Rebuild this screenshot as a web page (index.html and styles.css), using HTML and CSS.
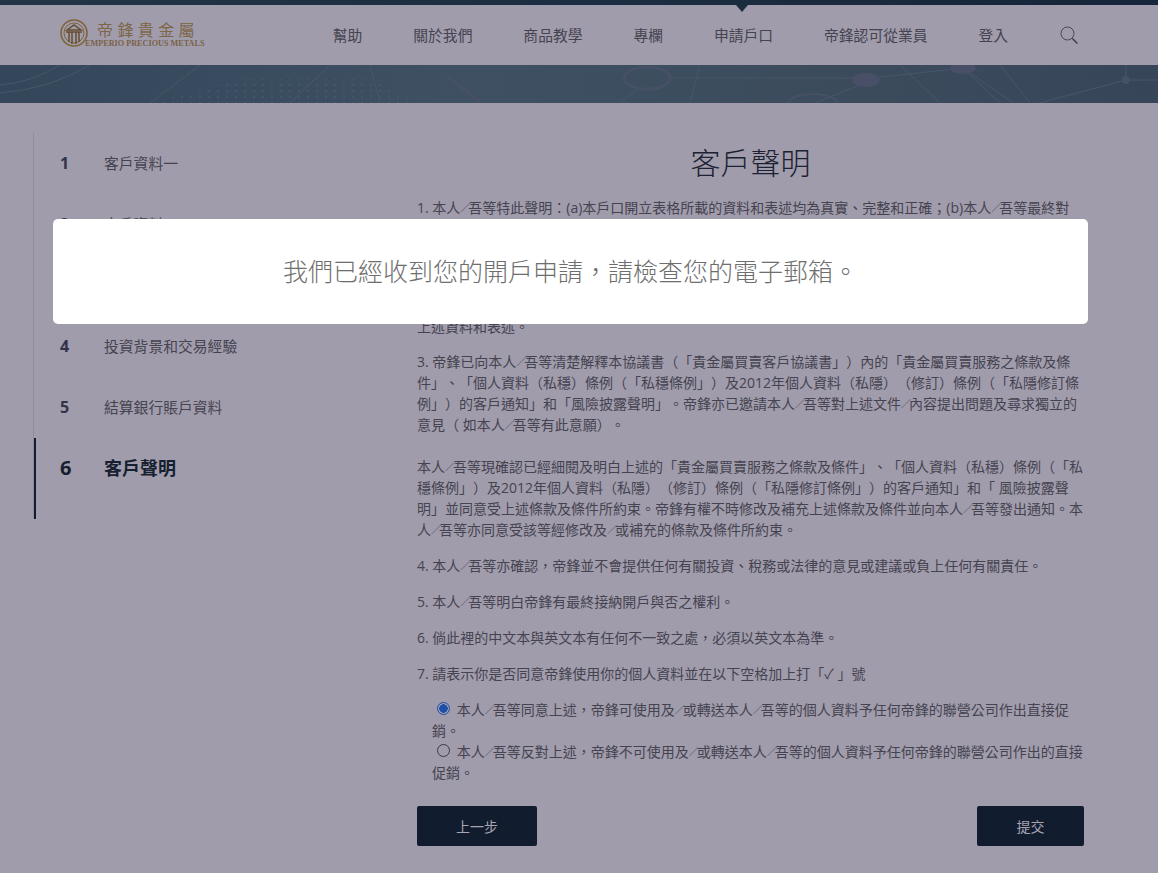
FILE: index.html
```html
<!DOCTYPE html>
<html>
<head>
<meta charset="utf-8" />
<title>客戶聲明</title>
<link rel="stylesheet" href="styles.css">
</head>
<body>
<div class="topline"><span class="topline_arrow"></span></div>
<div class="nav">
  <a class="logo">
    <svg class="logo_mark" viewBox="0 0 28 28" width="28" height="28">
      <circle cx="14" cy="14" r="13" fill="none" stroke="#7e6339" stroke-width="1.6"/>
      <circle cx="14" cy="14" r="10" fill="none" stroke="#7e6339" stroke-width="1"/>
      <path d="M7 11 L14 6 L21 11 Z M6 13 H22 M9 13 V23 M12 13 V25 M16 13 V25 M19 13 V23" fill="none" stroke="#654c2e" stroke-width="1.5"/>
    </svg>
    <span class="logo_text">
      <span class="logo_zh">帝鋒貴金屬</span>
      <span class="logo_en">EMPERIO PRECIOUS METALS</span>
    </span>
  </a>
  <div class="menu">
    <a>幫助</a>
    <a>關於我們</a>
    <a>商品教學</a>
    <a>專欄</a>
    <a>申請戶口</a>
    <a>帝鋒認可從業員</a>
    <a>登入</a>
    <svg class="search" viewBox="0 0 18 18" width="18" height="18">
      <circle cx="7.5" cy="7.5" r="6.5" fill="none" stroke="#4a4858" stroke-width="1"/>
      <path d="M12.4 12.4 L17.4 17.4" fill="none" stroke="#3c3a48" stroke-width="1.4"/>
    </svg>
  </div>
</div>
<div class="banner">
  <svg viewBox="0 0 1158 38" width="1158" height="38">
    <defs>
      <linearGradient id="bannerbg" x1="0" x2="1" y1="0" y2="0">
        <stop offset="0" stop-color="#34465a"/>
        <stop offset=".4" stop-color="#3e5062"/>
        <stop offset=".75" stop-color="#3b4b5c"/>
        <stop offset="1" stop-color="#374559"/>
      </linearGradient>
      <pattern id="dots" width="9" height="6" patternUnits="userSpaceOnUse">
        <circle cx="2" cy="2" r="1" fill="#4f6173"/>
      </pattern>
    </defs>
    <rect width="1158" height="38" fill="url(#bannerbg)"/>
    <path d="M150 38 L240 14 L370 14 L420 38 Z" fill="url(#dots)" opacity=".6"/>
    <g fill="none" stroke="#47576a" stroke-width="1">
      <path d="M0 28 Q50 24 90 0 M0 20 Q30 18 60 0 M150 38 L200 0 M290 38 L330 0 M370 0 L380 38"/>
      <path d="M670 13 H872 L963 3 L1013 38 M872 15 L815 38 M963 3 L1000 38 M1126 15 L1058 33 L1040 38 M1126 0 V15 L1158 15"/>
      <path d="M620 38 L640 22 M900 0 L940 38 M700 0 L690 38 M1000 0 L1030 38"/>
    </g>
    <ellipse cx="647" cy="13" rx="23" ry="11" fill="none" stroke="#465066" stroke-width="3"/>
    <ellipse cx="866" cy="15" rx="14" ry="7" fill="#484f66"/>
    <ellipse cx="963" cy="3" rx="13" ry="6" fill="#484f66"/>
    <ellipse cx="813" cy="38" rx="24" ry="9" fill="none" stroke="#465066" stroke-width="2"/>
    <path d="M448 12 L481 38" stroke="#465066" stroke-width="3"/>
    <circle cx="1126" cy="15" r="4" fill="#465066"/>
  </svg>
</div>

<div class="main">
  <div class="steps">
    <div class="step"><b>1</b><span>客戶資料一</span></div>
    <div class="step"><b>2</b><span>客戶資料二</span></div>
    <div class="step"><b>3</b><span>財務狀況</span></div>
    <div class="step"><b>4</b><span>投資背景和交易經驗</span></div>
    <div class="step"><b>5</b><span>結算銀行賬戶資料</span></div>
    <div class="step active"><b>6</b><span>客戶聲明</span></div>
  </div>
  <div class="content">
    <h1>客戶聲明</h1>
    <p class="tight">1. 本人<span class="sl">&#xFF0F;</span>吾等特此聲明&#xFF1A;(a)本戶口開立表格所載的資料和表述均為真實、完整和正確&#xFF1B;(b)本人<span class="sl">&#xFF0F;</span>吾等最終對<br>本戶口的交易及信貸風險負責&#xFF0C;且本人<span class="sl">&#xFF0F;</span>吾等為本戶口的唯一實益擁有人&#xFF1B;(c)本戶口開立表格所載的資料為最新資料&#xFF0C;若資料有任何變更&#xFF0C;本人<span class="sl">&#xFF0F;</span>吾等將立即通知帝鋒&#xFF1B;(d)本人<span class="sl">&#xFF0F;</span>吾等確認已閱讀並明白本戶口開立表格內的所有條款&#xFF0C;並同意受其約束。</p>
    <p class="tight">2. 本人<span class="sl">&#xFF0F;</span>吾等授權帝鋒或其代表向任何人士或機構查核及索取任何有關資料&#xFF0C;以核實本人<span class="sl">&#xFF0F;</span>吾等所提供的<br>上述資料和表述。</p>
    <p class="spaced">3. 帝鋒已向本人<span class="sl">&#xFF0F;</span>吾等清楚解釋本協議書&#xFF08;「貴金屬買賣客戶協議書」&#xFF09;內的「貴金屬買賣服務之條款及條件」、「個人資料&#xFF08;私穩&#xFF09;條例&#xFF08;「私穩條例」&#xFF09;及2012年個人資料&#xFF08;私隱&#xFF09;&#xFF08;修訂&#xFF09;條例&#xFF08;「私隱修訂條例」&#xFF09;的客戶通知」和「風險披露聲明」。帝鋒亦已邀請本人<span class="sl">&#xFF0F;</span>吾等對上述文件<span class="sl">&#xFF0F;</span>內容提出問題及尋求獨立的意見&#xFF08; 如本人<span class="sl">&#xFF0F;</span>吾等有此意願&#xFF09;。</p>
    <p>本人<span class="sl">&#xFF0F;</span>吾等現確認已經細閱及明白上述的「貴金屬買賣服務之條款及條件」、「個人資料&#xFF08;私穩&#xFF09;條例&#xFF08;「私穩條例」&#xFF09;及2012年個人資料&#xFF08;私隱&#xFF09;&#xFF08;修訂&#xFF09;條例&#xFF08;「私隱修訂條例」&#xFF09;的客戶通知」和「 風險披露聲明」並同意受上述條款及條件所約束。帝鋒有權不時修改及補充上述條款及條件並向本人<span class="sl">&#xFF0F;</span>吾等發出通知。本人<span class="sl">&#xFF0F;</span>吾等亦同意受該等經修改及<span class="sl">&#xFF0F;</span>或補充的條款及條件所約束。</p>
    <p>4. 本人<span class="sl">&#xFF0F;</span>吾等亦確認&#xFF0C;帝鋒並不會提供任何有關投資、稅務或法律的意見或建議或負上任何有關責任。</p>
    <p>5. 本人<span class="sl">&#xFF0F;</span>吾等明白帝鋒有最終接納開戶與否之權利。</p>
    <p>6. 倘此裡的中文本與英文本有任何不一致之處&#xFF0C;必須以英文本為準。</p>
    <p>7. 請表示你是否同意帝鋒使用你的個人資料並在以下空格加上打「✓ 」號</p>
    <div class="choices">
      <label><input type="radio" name="consent" checked /> 本人<span class="sl">&#xFF0F;</span>吾等同意上述&#xFF0C;帝鋒可使用及<span class="sl">&#xFF0F;</span>或轉送本人<span class="sl">&#xFF0F;</span>吾等的個人資料予任何帝鋒的聯營公司作出直接促銷。</label>
      <label><input type="radio" name="consent" /> 本人<span class="sl">&#xFF0F;</span>吾等反對上述&#xFF0C;帝鋒不可使用及<span class="sl">&#xFF0F;</span>或轉送本人<span class="sl">&#xFF0F;</span>吾等的個人資料予任何帝鋒的聯營公司作出的直接促銷。</label>
    </div>
    <div class="buttons">
      <button class="prev">上一步</button>
      <button class="submit">提交</button>
    </div>
  </div>
</div>

<div class="modal">我們已經收到您的開戶申請&#xFF0C;請檢查您的電子郵箱。</div>
</body>
</html>
```

FILE: styles.css
```css
* {
  box-sizing: border-box;
}
body {
  margin: 0;
  height: 873px;
  overflow: hidden;
  position: relative;
  background-color: #a09cac;
  color: #45434f;
  font-family: 'Open Sans', 'Noto Sans CJK TC', sans-serif;
  font-size: 14px;
  text-spacing-trim: space-all;
}
.topline {
  height: 5px;
  background: linear-gradient(to right, #213547, #16263a);
  position: relative;
}
.topline_arrow {
  position: absolute;
  left: 736px;
  top: 5px;
  border-left: 6px solid transparent;
  border-right: 6px solid transparent;
  border-top: 7px solid #1c2d40;
}
.nav {
  height: 60px;
  display: flex;
  align-items: center;
  justify-content: space-between;
  padding: 0 80px 0 60px;
}
.logo {
  display: flex;
  align-items: flex-start;
}
.logo_mark {
  display: block;
  margin-top: -2px;
}
.logo_text {
  display: block;
  margin-left: -3px;
}
.logo_zh {
  display: block;
  margin-left: 12px;
  font-size: 16px;
  line-height: 18px;
  letter-spacing: 4.4px;
  color: #7d6547;
}
.logo_en {
  display: block;
  font-family: 'Liberation Serif', serif;
  font-weight: bold;
  font-size: 8.2px;
  line-height: 10px;
  color: #7a6245;
  white-space: nowrap;
}
.menu {
  display: flex;
  align-items: center;
  gap: 50.9px;
  font-size: 14.8px;
  line-height: 20px;
  color: #45434f;
  margin-top: -1px;
}
.search {
  display: block;
  margin-left: 1px;
  margin-top: 1px;
}
.banner {
  height: 38px;
  overflow: hidden;
}
.banner svg {
  display: block;
}
.main {
  display: flex;
  padding: 31px 74px 0 33px;
}
.steps {
  width: 384px;
  height: 385px;
  margin-top: -1px;
  border-left: 1px solid #8f8b9c;
}
.step {
  display: flex;
  align-items: center;
  height: 61px;
  font-size: 14.8px;
  line-height: 22px;
  padding: 0 0 2px 26px;
}
.step b {
  width: 44px;
  font-size: 16px;
  color: #33324a;
}
.step.active {
  height: 81px;
  padding: 0 0 21px 24px;
  border-left: 2px solid #111d2e;
  color: #17202f;
}
.step.active b {
  font-size: 20px;
  color: #17202f;
}
.step.active span {
  font-size: 18px;
  font-weight: bold;
}
.content {
  width: 667px;
}
h1 {
  margin: 8px 0 13px;
  text-align: center;
  font-size: 30px;
  font-weight: 300;
  line-height: 42px;
  color: #1c2233;
}
p {
  margin: 0 0 15px;
  line-height: 21px;
}
p.tight {
  margin-bottom: 14px;
}
p.spaced {
  margin-bottom: 21px;
}
.sl {
  font-size: 10px;
  letter-spacing: -2px;
  line-height: 1;
  vertical-align: 1px;
}
.choices {
  padding: 0 0 0 15px;
}
.choices label {
  display: block;
  line-height: 21px;
}
.choices input {
  appearance: none;
  width: 13px;
  height: 13px;
  margin: 3px 3px 0 5px;
  border: 1px solid #3a3846;
  border-radius: 50%;
  vertical-align: 0;
}
.choices input:checked {
  border-color: #1b4fa8;
  background: radial-gradient(circle, #1b4fa8 0 4px, transparent 4.5px);
}
.buttons {
  display: flex;
  justify-content: space-between;
  margin-top: 23px;
}
button {
  height: 40px;
  border: 0;
  border-radius: 2px;
  background-color: #111d2e;
  color: #a8a4b2;
  font-family: inherit;
  font-size: 14px;
}
.prev {
  width: 120px;
}
.submit {
  width: 107px;
}
.modal {
  position: absolute;
  left: 53px;
  top: 219px;
  width: 1035px;
  height: 105px;
  border-radius: 5px;
  background-color: #fff;
  color: #6e6e6e;
  font-size: 25px;
  font-weight: 300;
  text-align: center;
  line-height: 105px;
}
```
